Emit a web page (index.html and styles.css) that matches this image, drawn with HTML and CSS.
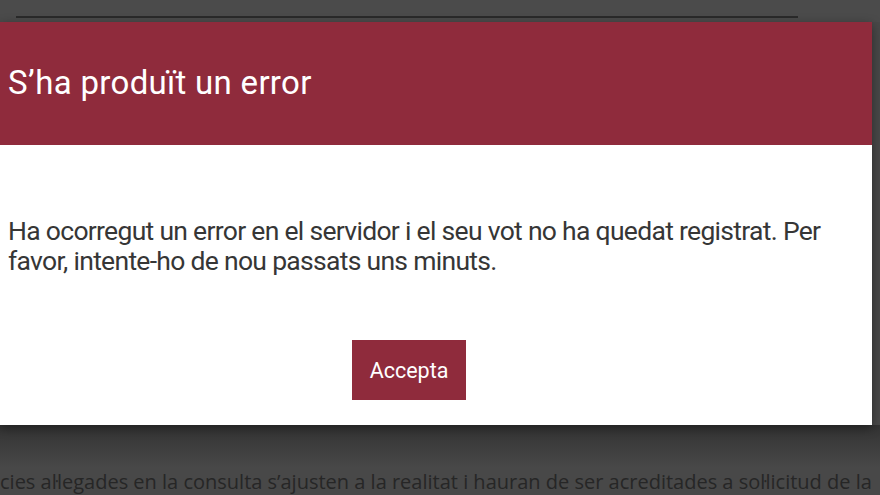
FILE: index.html
```html
<!DOCTYPE html>
<html lang="ca">
<head>
<meta charset="utf-8">
<title>Error</title>
<link rel="stylesheet" href="styles.css">
</head>
<body>
<div class="page">
  <div class="top">
    <div class="rule"></div>
  </div>
  <div class="modal">
    <div class="modal-header">
      <h1 class="modal-title">S’ha produït un error</h1>
    </div>
    <div class="modal-body">
      <p class="modal-text">Ha ocorregut un error en el servidor i el seu vot no ha quedat registrat. Per favor, intente-ho de nou passats uns minuts.</p>
      <div class="actions">
        <button class="btn">Accepta</button>
      </div>
    </div>
  </div>
  <div class="below">
    <p class="below-text">cies al·legades en la consulta s’ajusten a la realitat i hauran de ser acreditades a sol·licitud de la</p>
  </div>
</div>
</body>
</html>
```
FILE: styles.css
```css
html, body {
  margin: 0;
  padding: 0;
  width: 880px;
  height: 495px;
  overflow: hidden;
  background: #484848;
  font-family: Roboto, "Liberation Sans", sans-serif;
}
.page {
  display: flex;
  flex-direction: column;
  height: 495px;
}
.top {
  height: 22px;
  background: #4b4b4b;
  padding-left: 16px;
  box-sizing: border-box;
  padding-top: 16px;
}
.rule {
  width: 782px;
  height: 2px;
  background: #2a2a2a;
}
.modal {
  width: 872px;
  background: #fff;
  box-shadow: 0 3px 10px rgba(0,0,0,0.4);
  position: relative;
  z-index: 1;
}
.modal-header {
  height: 123px;
  background: #8f2b3c;
  display: flex;
  align-items: center;
  padding-left: 8px;
}
.modal-title {
  margin: 0;
  color: #fff;
  font-weight: 400;
  font-size: 33px;
  letter-spacing: 0.3px;
  line-height: 1;
  padding-bottom: 2px;
}
.modal-body {
  height: 280px;
  box-sizing: border-box;
  padding: 71px 20px 0 8px;
}
.modal-text {
  margin: 0;
  color: #363636;
  font-size: 26.5px;
  line-height: 30px;
  letter-spacing: -0.7px;
}
.actions {
  display: flex;
  padding-left: 344px;
  margin-top: 64px;
}
.btn {
  width: 114px;
  height: 60px;
  border: none;
  background: #8f2b3c;
  color: #fff;
  font-family: Roboto, "Liberation Sans", sans-serif;
  font-size: 21.5px;
  padding: 0;
}
.below {
  flex: 1;
  background: linear-gradient(#333333, #484848 60%);
  display: flex;
  align-items: flex-end;
}
.below-text {
  margin: 0 0 3px 0;
  color: #262626;
  font-family: "Open Sans", sans-serif;
  font-size: 20px;
  white-space: nowrap;
  line-height: 20px;
  letter-spacing: 0;
}
```
